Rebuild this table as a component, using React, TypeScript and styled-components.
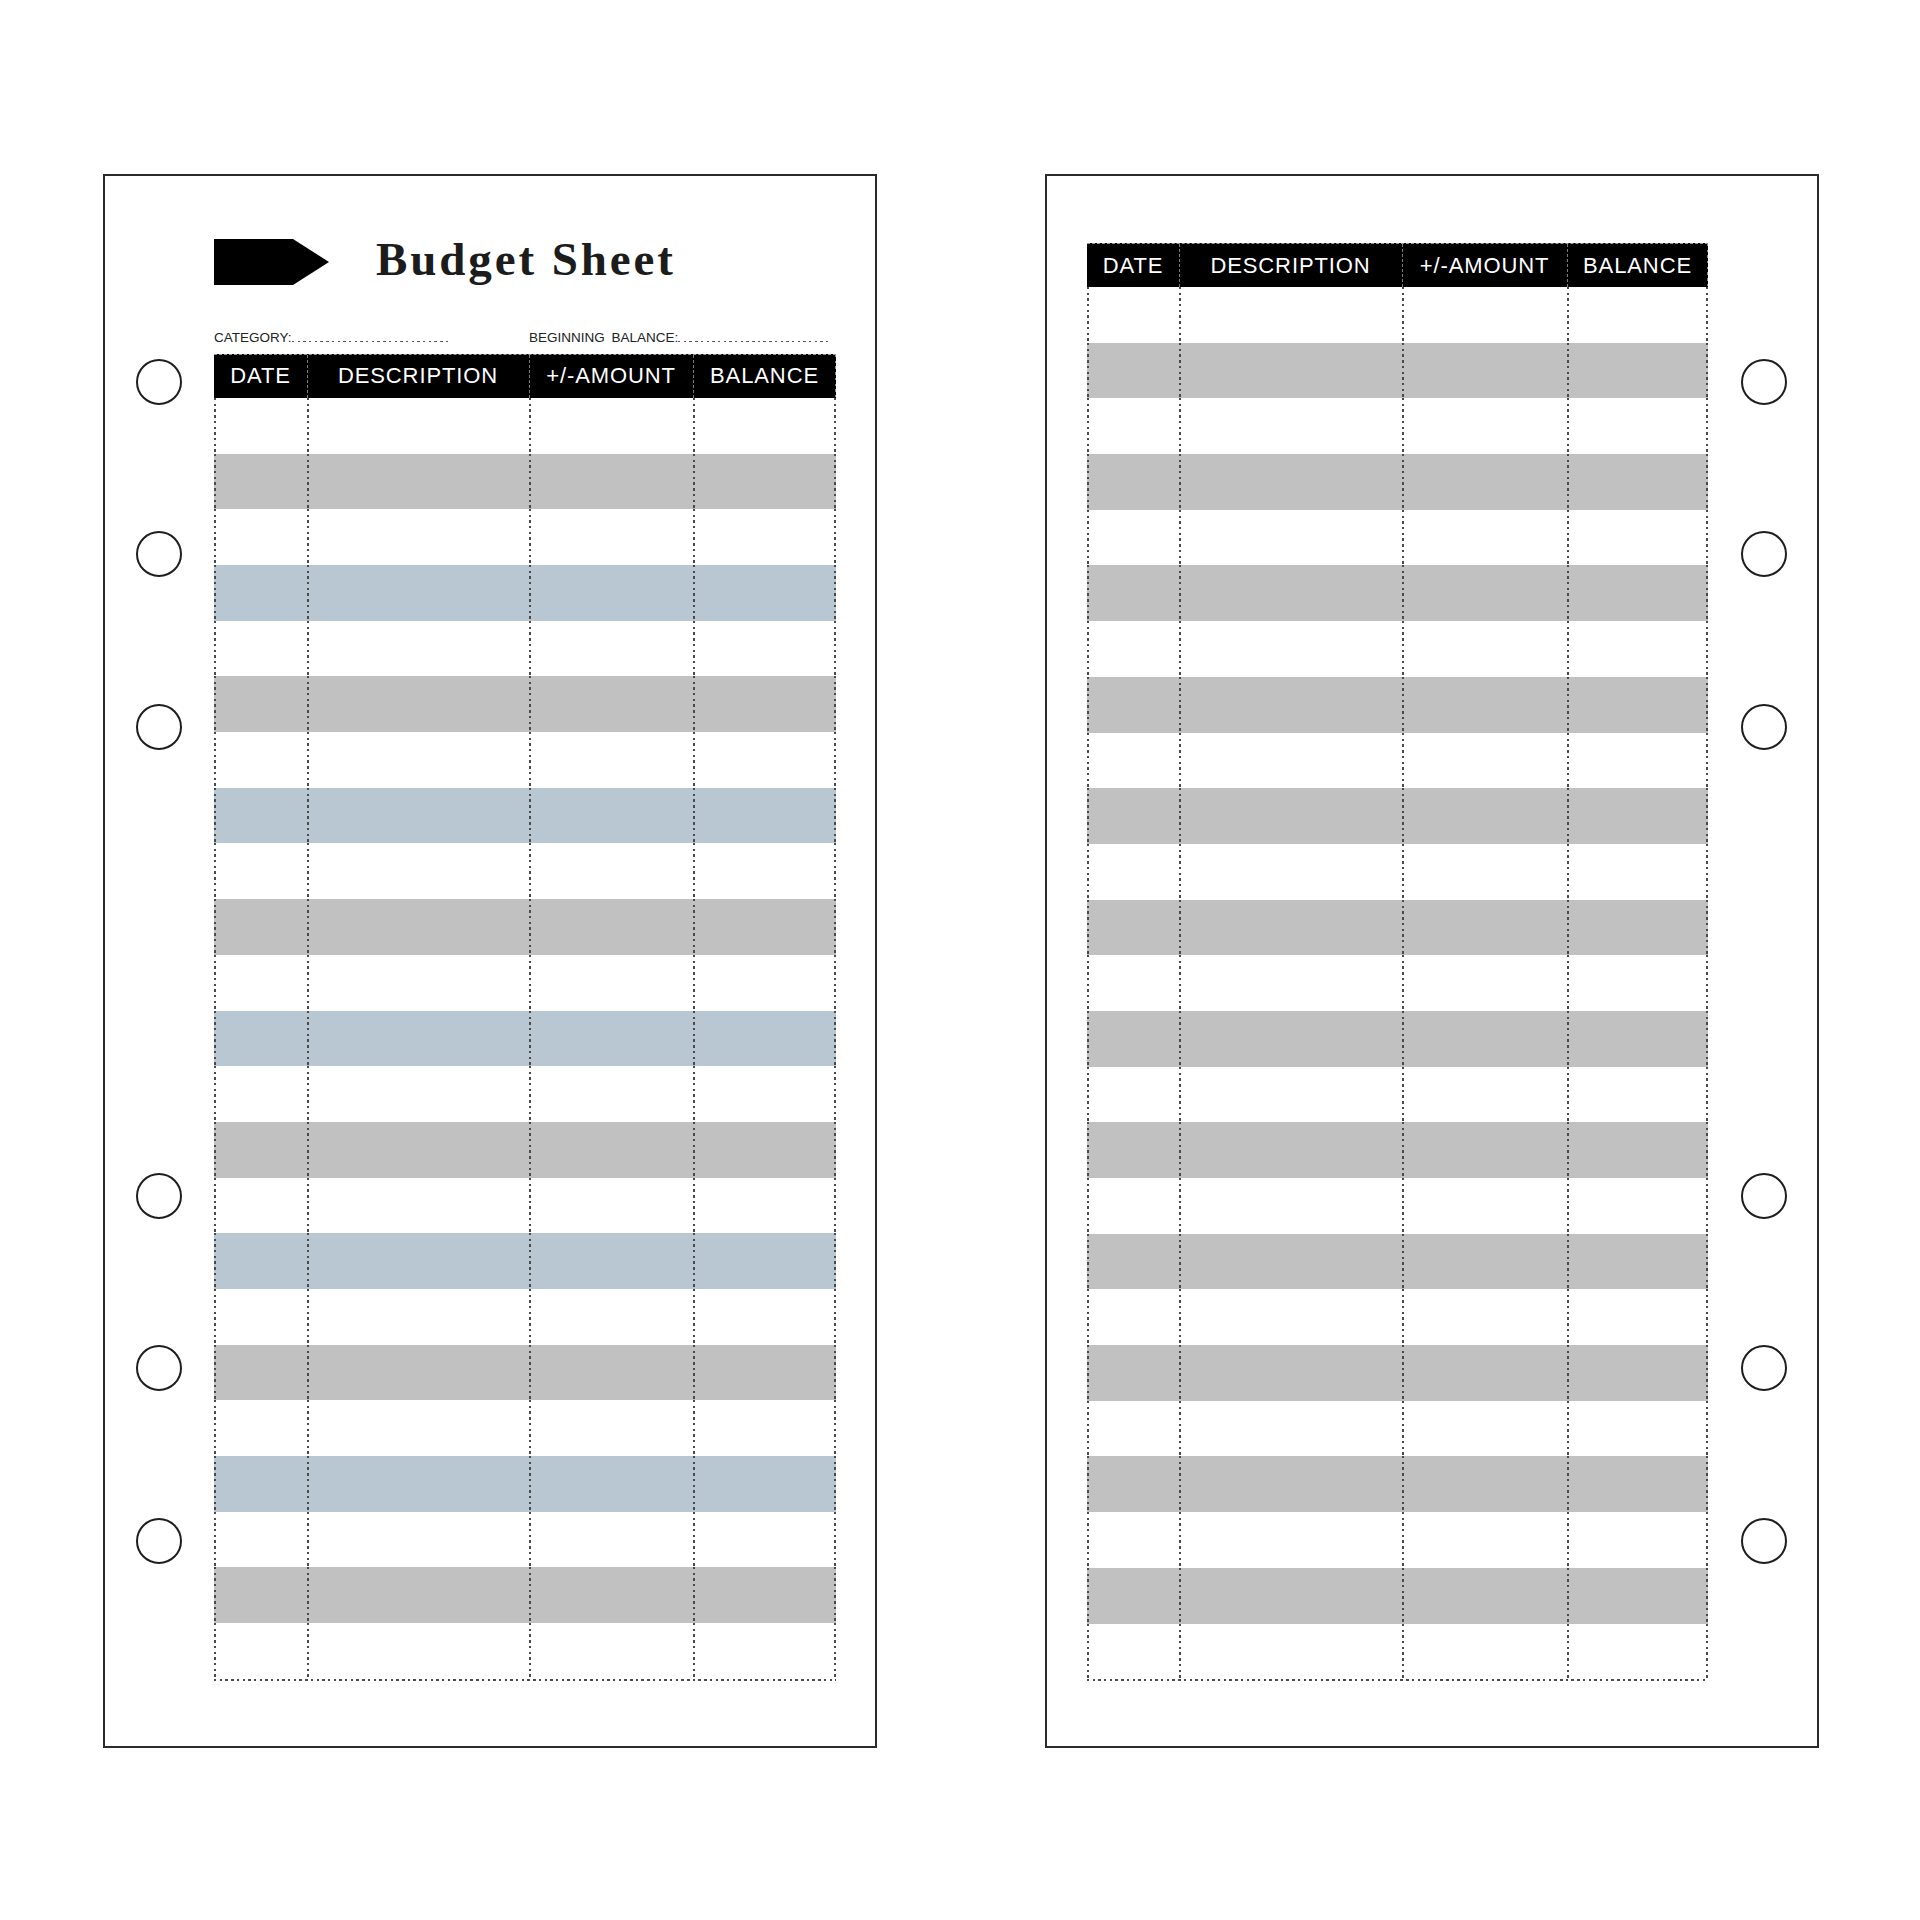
import React from "react";
import styled, { createGlobalStyle } from "styled-components";

const GlobalStyle = createGlobalStyle`
  html, body {
    margin: 0;
    padding: 0;
    background: #ffffff;
  }
  * {
    box-sizing: border-box;
  }
`;

const DOT = "#4a4a4a";
const vDots = (c: string) =>
  `repeating-linear-gradient(to bottom, ${c} 0 2.4px, transparent 2.4px 5.7px)`;
const hDots = (c: string) =>
  `repeating-linear-gradient(to right, ${c} 0 2.4px, transparent 2.4px 5.7px)`;

const Canvas = styled.div`
  width: 1920px;
  height: 1920px;
  display: flex;
  align-items: flex-start;
  padding: 174px 0 0 103px;
  gap: 168px;
  background: #ffffff;
`;

const Page = styled.div`
  width: 774px;
  height: 1574px;
  border: 2px solid #2b2b2b;
  background: #ffffff;
  display: flex;
  align-items: flex-start;
`;

const HoleRail = styled.div<{ $side: "left" | "right" }>`
  flex: 0 0 auto;
  display: flex;
  flex-direction: column;
  gap: 423px;
  padding-top: 182.5px;
  ${(p) =>
    p.$side === "left"
      ? "padding-left: 30.5px; margin-right: 32.5px;"
      : "padding-right: 31px; margin-left: 33px;"}
`;

const HoleGroup = styled.div`
  display: flex;
  flex-direction: column;
  gap: 126.5px;
`;

const Hole = styled.div`
  width: 46px;
  height: 46px;
  border-radius: 50%;
  border: 2px solid #1e1e1e;
`;

const Sheet = styled.div<{ $top: number; $left: number }>`
  display: flex;
  flex-direction: column;
  padding-top: ${(p) => p.$top}px;
  padding-left: ${(p) => p.$left}px;
`;

const TitleRow = styled.div`
  display: flex;
  align-items: flex-start;
  height: 46px;
`;

const Title = styled.h1`
  margin: -3.4px 0 0 47px;
  font-family: "Liberation Serif", "Times New Roman", serif;
  font-weight: 700;
  font-size: 47px;
  line-height: 47px;
  letter-spacing: 2.9px;
  color: #1c1c1c;
  white-space: nowrap;
`;

const MetaRow = styled.div`
  display: flex;
  align-items: baseline;
  margin-top: 45.3px;
  height: 16px;
  font-family: "Liberation Sans", Arial, sans-serif;
  font-size: 13.5px;
  line-height: 16px;
  color: #222222;
`;

const Field = styled.div<{ $width?: number }>`
  display: flex;
  align-items: baseline;
  ${(p) => (p.$width ? `flex: 0 0 ${p.$width}px;` : "")}
`;

const Label = styled.span`
  white-space: nowrap;
  word-spacing: 3px;
`;

const Fill = styled.div<{ $width: number }>`
  width: ${(p) => p.$width}px;
  height: 1.4px;
  background-image: ${hDots("#555555")};
`;

const Table = styled.div<{ $width: number; $gap: number }>`
  width: ${(p) => p.$width}px;
  margin-top: ${(p) => p.$gap}px;
  display: flex;
  flex-direction: column;
`;

const HeadRow = styled.div<{ $cols: string }>`
  display: grid;
  grid-template-columns: ${(p) => p.$cols};
  height: 44px;
  background: #000000;
  border-top: 1px dashed #9a9a9a;
`;

const HeadCell = styled.div<{ $first?: boolean; $last?: boolean }>`
  display: flex;
  align-items: center;
  justify-content: center;
  color: #ffffff;
  font-family: "Liberation Sans", Arial, sans-serif;
  font-size: 22px;
  letter-spacing: 0.9px;
  white-space: nowrap;
  background-repeat: no-repeat;
  background-image: ${(p) =>
    [
      p.$first ? null : "repeating-linear-gradient(to bottom, #7c7c7c 0 3px, transparent 3px 5px)",
      p.$last ? vDots("#8a8a8a") : null,
    ]
      .filter(Boolean)
      .join(", ") || "none"};
  background-size: ${(p) =>
    [p.$first ? null : "1px 100%", p.$last ? "1.5px 100%" : null].filter(Boolean).join(", ") ||
    "auto"};
  background-position: ${(p) =>
    [p.$first ? null : "left top", p.$last ? "right top" : null].filter(Boolean).join(", ") ||
    "0 0"};
`;

type Tone = "none" | "gray" | "blue";

const toneColor: Record<Tone, string> = {
  none: "transparent",
  gray: "#c1c1c1",
  blue: "#b8c7d2",
};

const Row = styled.div<{ $cols: string; $tone: Tone }>`
  display: grid;
  grid-template-columns: ${(p) => p.$cols};
  height: 55.7px;
  background-color: ${(p) => toneColor[p.$tone]};
`;

const Cell = styled.div<{ $last?: boolean }>`
  background-repeat: no-repeat;
  background-image: ${(p) => (p.$last ? `${vDots(DOT)}, ${vDots(DOT)}` : vDots(DOT))};
  background-size: ${(p) => (p.$last ? "2px 100%, 2px 100%" : "2px 100%")};
  background-position: ${(p) => (p.$last ? "left top, right top" : "left top")};
`;

const BottomRule = styled.div`
  height: 2px;
  background-image: ${hDots(DOT)};
`;

const HEADERS = ["DATE", "DESCRIPTION", "+/-AMOUNT", "BALANCE"];

const Arrow: React.FC = () => (
  <svg width="115" height="46" viewBox="0 0 115 46" aria-hidden="true">
    <polygon points="0,0 79,0 115,23 79,46 0,46" fill="#000000" />
  </svg>
);

const Holes: React.FC<{ side: "left" | "right" }> = ({ side }) => (
  <HoleRail $side={side}>
    <HoleGroup>
      <Hole />
      <Hole />
      <Hole />
    </HoleGroup>
    <HoleGroup>
      <Hole />
      <Hole />
      <Hole />
    </HoleGroup>
  </HoleRail>
);

const Ledger: React.FC<{
  cols: string;
  width: number;
  gap: number;
  rows: number;
  tones: (stripeIndex: number) => Tone;
}> = ({ cols, width, gap, rows, tones }) => (
  <Table $width={width} $gap={gap}>
    <HeadRow $cols={cols}>
      {HEADERS.map((h, i) => (
        <HeadCell key={h} $first={i === 0} $last={i === HEADERS.length - 1}>
          {h}
        </HeadCell>
      ))}
    </HeadRow>
    {Array.from({ length: rows }).map((_, r) => {
      const tone: Tone = r % 2 === 1 ? tones((r - 1) / 2) : "none";
      return (
        <Row key={r} $cols={cols} $tone={tone}>
          {HEADERS.map((h, i) => (
            <Cell key={h} $last={i === HEADERS.length - 1} />
          ))}
        </Row>
      );
    })}
    <BottomRule />
  </Table>
);

export default function App() {
  return (
    <>
      <GlobalStyle />
      <Canvas>
        <Page>
          <Holes side="left" />
          <Sheet $top={63} $left={0}>
            <TitleRow>
              <Arrow />
              <Title>Budget Sheet</Title>
            </TitleRow>
            <MetaRow>
              <Field $width={315}>
                <Label>CATEGORY:</Label>
                <Fill $width={158} />
              </Field>
              <Field>
                <Label>BEGINNING BALANCE:</Label>
                <Fill $width={150} />
              </Field>
            </MetaRow>
            <Ledger
              cols="93px 222px 164px 143px"
              width={622}
              gap={7.7}
              rows={23}
              tones={(k) => (k % 2 === 0 ? "gray" : "blue")}
            />
          </Sheet>
        </Page>
        <Page>
          <Sheet $top={67} $left={40}>
            <Ledger
              cols="92px 223px 165px 141px"
              width={621}
              gap={0}
              rows={25}
              tones={() => "gray"}
            />
          </Sheet>
          <Holes side="right" />
        </Page>
      </Canvas>
    </>
  );
}
